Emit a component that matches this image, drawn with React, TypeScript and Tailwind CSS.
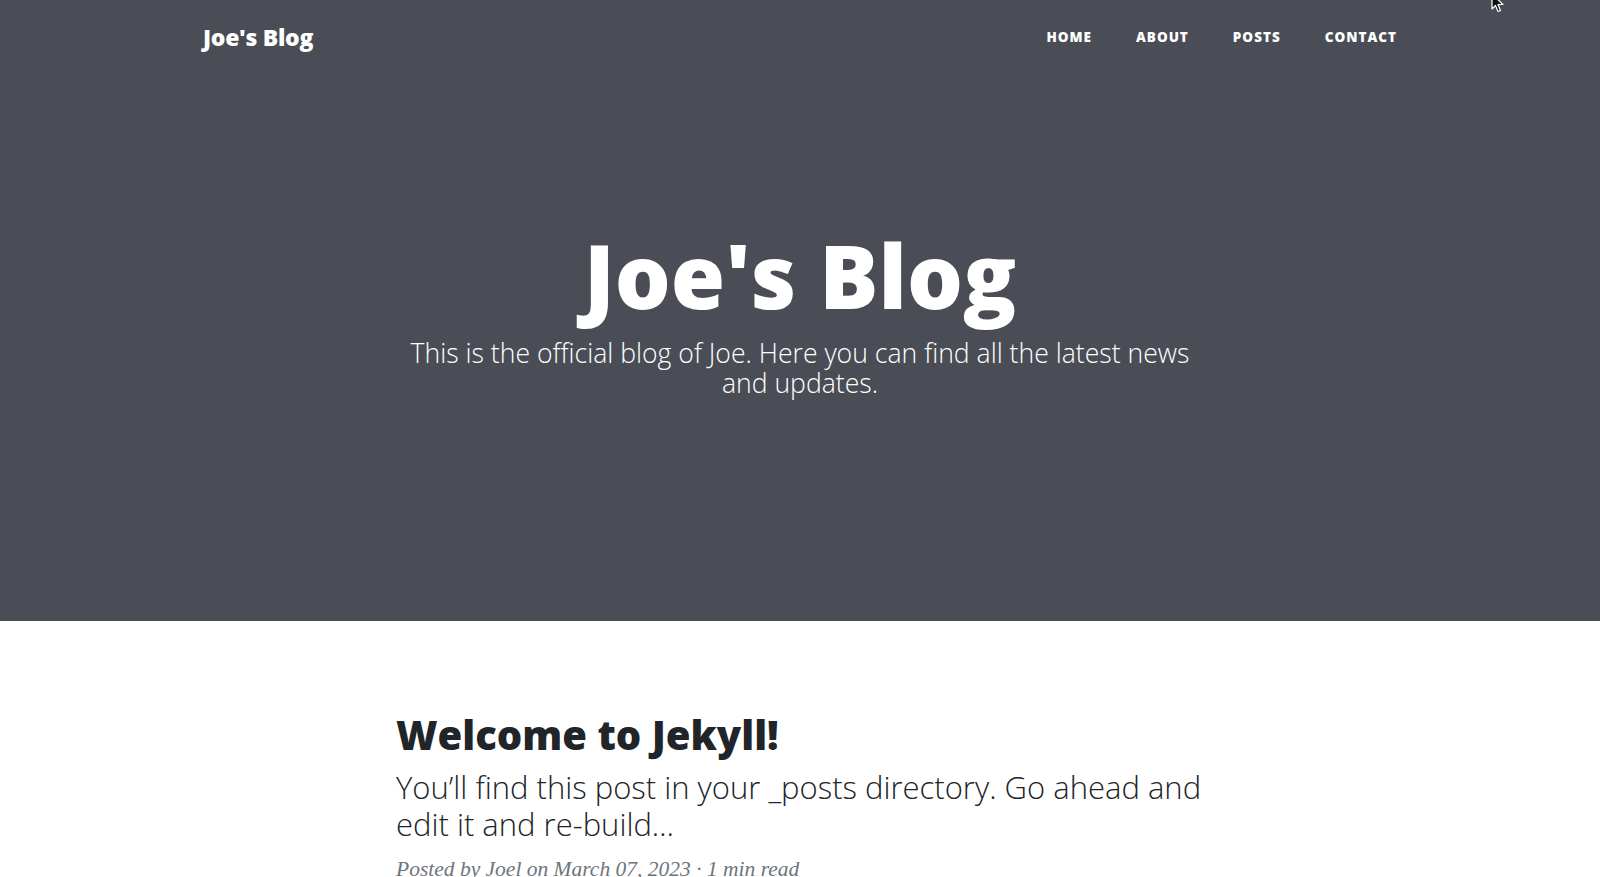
import React from 'react';

const navItems = ['Home', 'About', 'Posts', 'Contact'];

function Cursor() {
  return (
    <svg className="absolute left-[1491px] top-[-7px] w-[14px] h-[21px]" viewBox="0 0 14 21">
      <path d="M1 1 L1 16 L4.5 12.5 L7 18.5 L9.5 17.5 L7 11.5 L12 11.5 Z" fill="#111" stroke="#fff" strokeWidth="1.2" strokeLinejoin="round" />
    </svg>
  );
}

export default function App() {
  return (
    <div className="relative min-h-screen bg-white font-['Open_Sans','Liberation_Sans',sans-serif] overflow-hidden">
      <header className="bg-[#4a4d55] h-[621px] text-white">
        <nav className="w-[1194px] mx-auto flex justify-between items-start pt-[21px]">
          <a href="#" className="text-[23px] leading-[32px] font-extrabold tracking-[-0.3px]">Joe's Blog</a>
          <ul className="flex gap-[44px] mt-[3px]">
            {navItems.map((item) => (
              <li key={item}>
                <a href="#" className="text-[13.5px] leading-[20px] font-extrabold uppercase tracking-[1px]">{item}</a>
              </li>
            ))}
          </ul>
        </nav>

        <div className="w-[800px] mx-auto text-center pt-[174px]">
          <h1 className="text-[88px] leading-[1.1] font-extrabold">Joe's Blog</h1>
          <p className="mt-[14px] text-[26.6px] leading-[30px] font-light">
            This is the official blog of Joe. Here you can find all the latest news and updates.
          </p>
        </div>
      </header>

      <main className="w-[840px] mx-auto pt-[90px] pl-[16px]">
        <article>
          <h2 className="text-[40px] leading-[1.2] font-extrabold text-[#212529]">Welcome to Jekyll!</h2>
          <h3 className="mt-[10px] text-[31px] leading-[37px] font-light text-[#212529]">
            You’ll find this post in your _posts directory. Go ahead and edit it and re-build…
          </h3>
          <p className="mt-[13px] text-[21.5px] leading-[26px] italic text-[#6c757d] font-['Liberation_Serif',serif]">
            Posted by Joel on March 07, 2023 · 1 min read
          </p>
        </article>
      </main>

      <Cursor />
    </div>
  );
}
